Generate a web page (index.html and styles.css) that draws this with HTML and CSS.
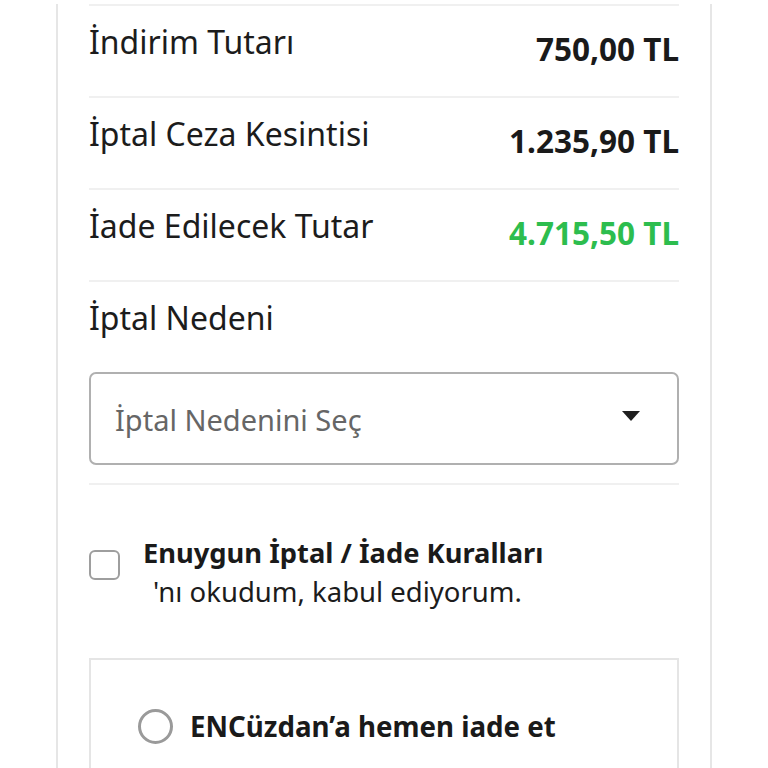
FILE: index.html
```html
<!DOCTYPE html>
<html lang="tr">
<head>
    <meta charset="UTF-8">
    <meta name="viewport" content="width=device-width, initial-scale=1.0">
    <title>İptal / İade</title>
    <link rel="stylesheet" href="styles.css">
</head>
<body>
    <div class="page">
        <div class="card">
            <!-- Summary rows -->
            <div class="row">
                <span class="row-label">İndirim Tutarı</span>
                <span class="row-amount">750,00 TL</span>
            </div>
            <div class="row">
                <span class="row-label">İptal Ceza Kesintisi</span>
                <span class="row-amount">1.235,90 TL</span>
            </div>
            <div class="row">
                <span class="row-label">İade Edilecek Tutar</span>
                <span class="row-amount refund">4.715,50 TL</span>
            </div>

            <!-- Reason -->
            <div class="reason">
                <div class="row-label">İptal Nedeni</div>
                <div class="select">
                    <span class="select-text">İptal Nedenini Seç</span>
                    <span class="caret"></span>
                </div>
            </div>

            <!-- Agreement -->
            <label class="agree">
                <span class="checkbox"></span>
                <span class="agree-text">
                    <span class="agree-link">Enuygun İptal / İade Kuralları</span>
                    <span class="agree-rest">'nı okudum, kabul ediyorum.</span>
                </span>
            </label>

            <!-- Refund options -->
            <div class="refund-box">
                <div class="option">
                    <span class="radio"></span>
                    <span class="option-text">ENCüzdan’a hemen iade et</span>
                </div>
            </div>
        </div>
    </div>
</body>
</html>
```

FILE: styles.css
```css
* {
    margin: 0;
    padding: 0;
    box-sizing: border-box;
}

html, body {
    height: 100%;
    overflow: hidden;
}

body {
    font-family: 'Noto Sans', 'Open Sans', sans-serif;
    background: #ffffff;
    color: #1c1c1c;
}

.page {
    padding: 4px 56px 0;
}

.card {
    border: 2px solid #e6e6e6;
    border-top: none;
    padding: 0 31px 40px;
    background: #ffffff;
}

.row {
    height: 92px;
    display: flex;
    justify-content: space-between;
    align-items: flex-start;
    border-top: 2px solid #f0f0f0;
    padding-top: 16px;
}

.row-label {
    font-size: 32px;
    line-height: 40px;
    color: #1c1c1c;
}

.row-amount {
    font-size: 31.5px;
    line-height: 40px;
    font-weight: 700;
    color: #1a1a1a;
    margin-top: 7px;
}

.row-amount.refund {
    color: #2dbd4e;
}

.reason {
    border-top: 2px solid #f0f0f0;
    padding: 16px 0 18px;
}

.select {
    margin-top: 34px;
    height: 93px;
    border: 2px solid #b0b0b0;
    border-radius: 7px;
    display: flex;
    align-items: center;
    justify-content: space-between;
    padding: 0 37px 0 24px;
}

.select-text {
    font-size: 29px;
    line-height: 40px;
    color: #666666;
    margin-top: 3px;
}

.caret {
    width: 0;
    height: 0;
    border-left: 9.5px solid transparent;
    border-right: 9.5px solid transparent;
    border-top: 10px solid #1f1f1f;
    margin-bottom: 6px;
}

.agree {
    border-top: 2px solid #f0f0f0;
    padding-top: 48px;
    display: flex;
    align-items: flex-start;
    gap: 23px;
}

.checkbox {
    width: 31px;
    height: 30px;
    border: 2px solid #9e9e9e;
    border-radius: 6px;
    margin-top: 17px;
    flex-shrink: 0;
}

.agree-text {
    display: flex;
    flex-direction: column;
}

.agree-link {
    font-size: 27.3px;
    line-height: 39px;
    font-weight: 700;
    color: #1a1a1a;
}

.agree-rest {
    font-size: 27.5px;
    line-height: 39px;
    color: #1c1c1c;
    padding-left: 10px;
}

.refund-box {
    margin-top: 47px;
    border: 2px solid #e5e5e5;
    border-bottom: none;
    height: 200px;
    padding: 47px 0 0 47px;
}

.option {
    display: flex;
    align-items: center;
    gap: 17px;
}

.radio {
    width: 35px;
    height: 35px;
    border: 3px solid #9a9a9a;
    border-radius: 50%;
    flex-shrink: 0;
}

.option-text {
    font-size: 27.7px;
    line-height: 39px;
    font-weight: 700;
    color: #1a1a1a;
}
```
